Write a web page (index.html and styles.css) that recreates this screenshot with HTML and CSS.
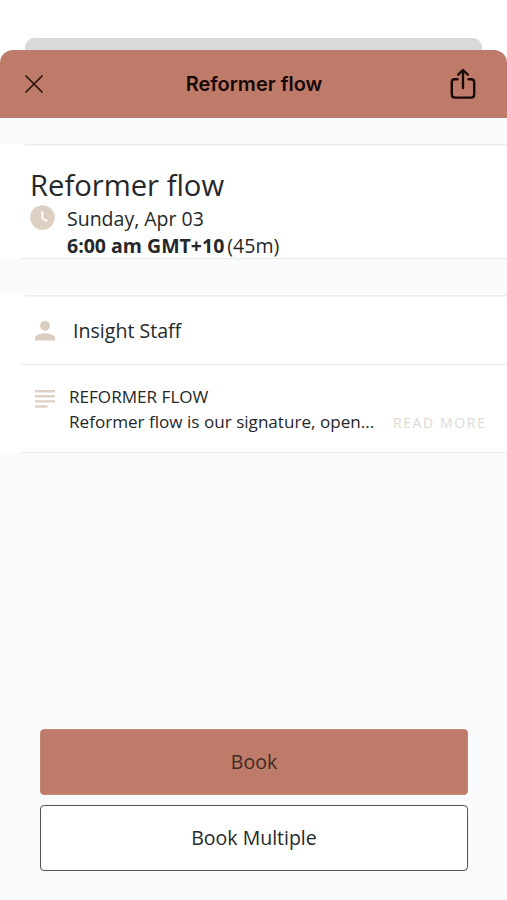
FILE: index.html
```html
<!DOCTYPE html>
<html lang="en">
<head>
<meta charset="utf-8">
<meta name="viewport" content="width=device-width, initial-scale=1">
<title>Reformer flow</title>
<link rel="stylesheet" href="styles.css">
</head>
<body>
<div class="backdrop"></div>
<main class="sheet">
  <header class="bar">
    <button class="icon-button" aria-label="Close">
      <svg width="20" height="20" viewBox="0 0 20 20" fill="none" stroke="#2b120c" stroke-width="1.7"><path d="M1.5 1.5l17 17M18.5 1.5l-17 17"/></svg>
    </button>
    <h1 class="bar-title">Reformer flow</h1>
    <button class="icon-button" aria-label="Share">
      <svg width="26" height="32" viewBox="0 0 26 32" fill="none" stroke="#180b08" stroke-width="2.400" stroke-linecap="round" stroke-linejoin="round"><path d="M7.500 11.200H4.600Q1.800 11.200 1.800 14v12.600q0 3 3 3h16.400q3 0 3-3V14q0-2.800-2.800-2.800H18.500M13 20V2.500M8.200 6.700L13 2l4.800 4.700"/></svg>
    </button>
  </header>
  <section class="card session">
    <h2 class="session-name">Reformer flow</h2>
    <div class="session-time">
      <svg class="clock" width="25" height="25" viewBox="0 0 25 25"><circle cx="12.500" cy="12.500" r="12.300" fill="#ddd0c2"/><path d="M12.300 6.300v6.700l5 3.500" fill="none" stroke="#fff" stroke-width="1.900"/></svg>
      <div class="when">
        <p>Sunday, Apr 03</p>
        <p><strong>6:00 am GMT+10</strong><span class="duration">(45m)</span></p>
      </div>
    </div>
  </section>
  <section class="card details">
    <div class="staff">
      <svg width="20" height="20" viewBox="0 0 20 20" fill="#d9cec0"><circle cx="10" cy="4.800" r="4.900"/><path d="M0 19.500v-2.500C0 13.700 6 12.200 10 12.200s10 1.500 10 4.800v2.500z"/></svg>
      <span class="staff-name">Insight Staff</span>
    </div>
    <div class="about">
      <svg width="20" height="18" viewBox="0 0 20 18" fill="#ddd0c5"><path d="M0 0h20v2.400H0zM0 5h20v2.400H0zM0 10.200h20v2.400H0zM0 15.300h12.500v2.400H0z"/></svg>
      <div class="about-text">
        <p>REFORMER FLOW</p>
        <p class="summary">Reformer flow is our signature, open...</p>
      </div>
      <a class="more">READ MORE</a>
    </div>
  </section>
  <footer class="actions">
    <button class="button primary">Book</button>
    <button class="button secondary">Book Multiple</button>
  </footer>
</main>
</body>
</html>
```
FILE: styles.css
```css
* { box-sizing: border-box; }
body {
  margin: 0;
  height: 900px;
  display: flex;
  flex-direction: column;
  padding-top: 38px;
  background: #fff;
  color: #25282b;
  font-family: "Open Sans", sans-serif;
  white-space: nowrap;
  overflow: hidden;
}
h1, h2, p { margin: 0; }
svg { display: block; flex: none; }
button { font: inherit; color: inherit; padding: 0; }
.backdrop {
  flex: none;
  height: 12px;
  margin: 0 25px;
  border-radius: 9px 9px 0 0;
  background: #d7d9da;
}
.sheet {
  flex: 1;
  display: flex;
  flex-direction: column;
  border-radius: 13px 13px 0 0;
  background: #f8fafc;
  overflow: hidden;
}
.bar {
  flex: none;
  height: 68px;
  display: grid;
  grid-template-columns: 26px 1fr 26px;
  align-items: center;
  padding: 0 31px 0 21px;
  background: #bf7b69;
}
.bar-title {
  padding-left: 11px;
  text-align: center;
  color: #140907;
  font: 600 20px/28px Inter, sans-serif;
}
.icon-button {
  display: grid;
  place-items: center;
  border: 0;
  background: none;
}
.card {
  flex: none;
  background: linear-gradient(#e9ebed, #e9ebed) 25px 0 / 100% 1.500px no-repeat,
    linear-gradient(#e9ebed, #e9ebed) 20px 100% / 100% 1.500px no-repeat, #fff;
}
.session {
  height: 115px;
  margin-top: 26px;
  padding: 22px 30px 0;
}
.session-name { font-size: 29.200px; line-height: 38px; font-weight: 400; }
.session-time { display: flex; gap: 12px; }
.clock { margin-top: 1px; }
.when { font-size: 19.500px; line-height: 27px; padding-top: 1px; }
.duration { margin-left: 3px; }
.details { height: 158px; margin-top: 36px; }
.staff {
  height: 69px;
  display: flex;
  align-items: center;
  gap: 18px;
  padding: 2px 0 0 35px;
}
.staff-name { font-size: 19.600px; }
.about {
  height: 89px;
  display: flex;
  margin-left: 20px;
  padding: 19px 0 0 15px;
  border-top: 1px solid #e9ebed;
}
.about svg { margin-top: 6px; }
.about-text { margin-left: 14px; width: 324px; font-size: 17.100px; line-height: 25px; }
.more { margin-top: 27px; color: #ded9d4; font-size: 14px; line-height: 24px; letter-spacing: 1.600px; }
.actions {
  margin: auto 39px 29px 40px;
  display: flex;
  flex-direction: column;
  gap: 10px;
}
.button { height: 66px; border-radius: 4px; padding-bottom: 2px; font-size: 19.500px; }
.primary { border: 1px solid #c88674; background: #bf7b69; color: #402923; }
.secondary { border: 1.500px solid #505254; background: #fff; }
```
